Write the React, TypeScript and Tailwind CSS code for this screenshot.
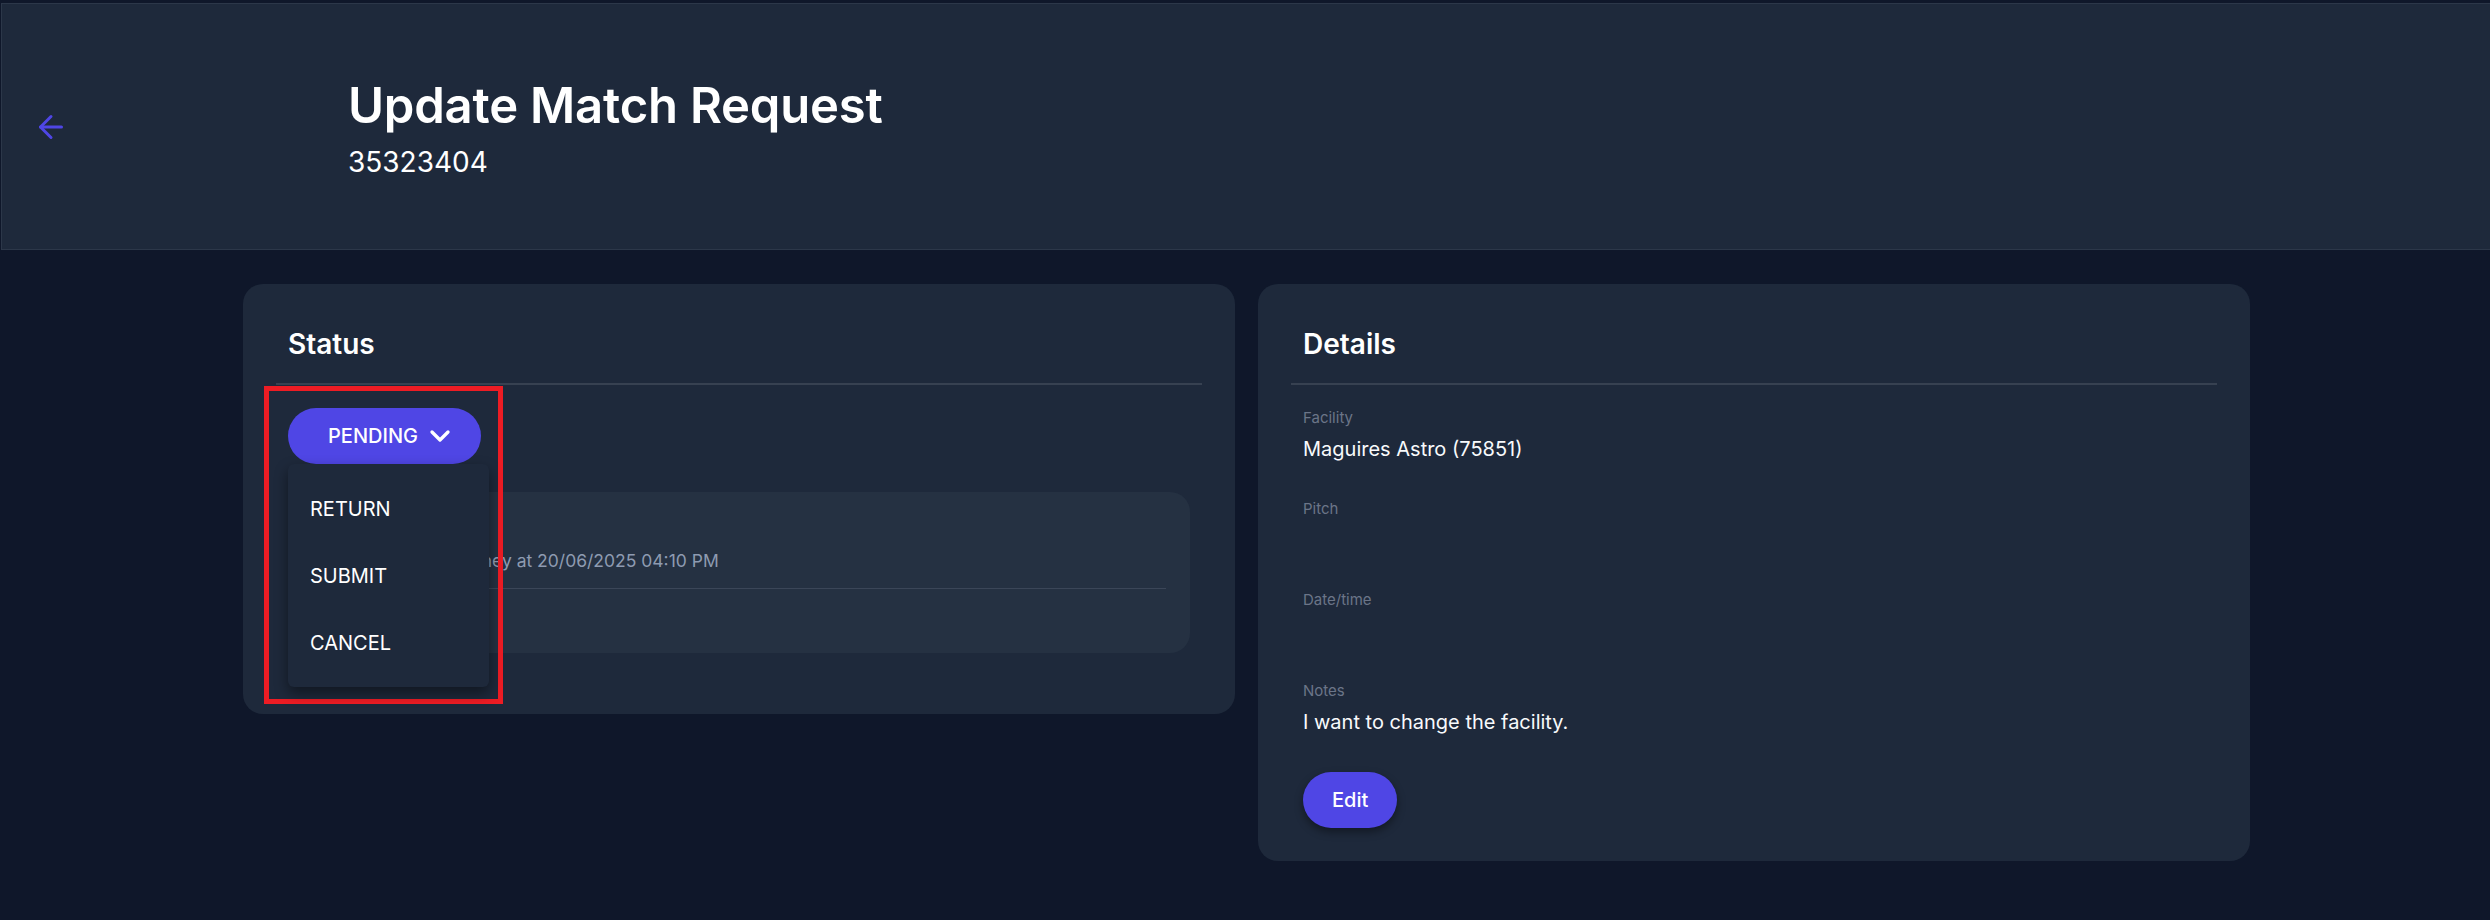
import React from "react";
import { ArrowLeft, ChevronDown } from "lucide-react";

const fields = [
  { label: "Facility", value: "Maguires Astro (75851)" },
  { label: "Pitch", value: "" },
  { label: "Date/time", value: "" },
  { label: "Notes", value: "I want to change the facility." },
];

const options = ["RETURN", "SUBMIT", "CANCEL"];

export default function App() {
  return (
    <div className="min-h-[920px] bg-[#0f172a] pt-[3px] font-['Inter',sans-serif] text-white">
      {/* Header */}
      <header className="ml-[1px] flex h-[247px] items-center border border-r-0 border-[#2c3749] bg-[#1e293b]">
        <button className="ml-[31px] text-[#4f46e5]">
          <ArrowLeft size={36} strokeWidth={2} />
        </button>
        <div className="ml-[279px] pt-[5px]">
          <h1 className="text-[49px] font-semibold leading-[56px] tracking-[-0.2px]">Update Match Request</h1>
          <p className="mt-[10px] text-[28px] leading-[36px]">35323404</p>
        </div>
      </header>

      <main className="ml-[243px] mt-[34px] grid w-[2007px] grid-cols-2 items-start gap-[23px]">
        {/* Status card */}
        <section className="relative rounded-[20px] bg-[#1e293b] px-[33px] pt-[42px] pb-[61px]">
          <h2 className="px-3 text-[28px] font-semibold leading-[36px]">Status</h2>
          <div className="mt-[21px] h-[2px] bg-[#374151]" />

          <div className="px-3">
            <div className="relative mt-[23px] inline-block">
              <button className="flex h-[56px] items-center gap-1.5 rounded-full bg-[#4f46e5] pl-10 pr-[25px] text-[20px] font-medium">
                PENDING
                <ChevronDown size={32} strokeWidth={2.5} />
              </button>
              <div className="absolute left-0 top-full z-10 w-[201px] rounded-md bg-[#1e293b] py-[11px] shadow-[0_6px_14px_rgba(0,0,0,0.45)]">
                {options.map((o) => (
                  <div key={o} className="flex h-[67px] items-center pl-[22px] text-[20px]">
                    {o}
                  </div>
                ))}
              </div>
            </div>

            <div className="mt-[28px] rounded-[20px] bg-[#253142] px-6 pt-[56px] pb-6">
              <div className="whitespace-nowrap text-[17.5px] leading-[26px] text-[#8e9bb1]">
                Created by Jon Kearney at 20/06/2025 04:10 PM
              </div>
              <div className="mt-[14px] h-px bg-[#3b4658]" />
              <div className="h-[40px]" />
            </div>
          </div>

          {/* annotation outline */}
          <div className="pointer-events-none absolute left-[21px] top-[102px] h-[318px] w-[239px] border-[5px] border-[#ed1c24]" />
        </section>

        {/* Details card */}
        <section className="rounded-[20px] bg-[#1e293b] px-[33px] pt-[42px] pb-[33px]">
          <h2 className="px-3 text-[28px] font-semibold leading-[36px]">Details</h2>
          <div className="mt-[21px] h-[2px] bg-[#374151]" />

          <div className="px-3 pt-[23px]">
            {fields.map((f) => (
              <div key={f.label} className="mb-[36px]">
                <div className="text-[15px] leading-[20px] text-[#6b7588]">{f.label}</div>
                <div className="mt-[7px] min-h-[28px] text-[20px] leading-[28px] text-[#f8fafc]">{f.value}</div>
              </div>
            ))}
            <button className="h-[56px] rounded-full bg-[#4f46e5] px-[29px] text-[20px] font-medium shadow-[0_4px_8px_rgba(0,0,0,0.4)]">
              Edit
            </button>
          </div>
        </section>
      </main>
    </div>
  );
}
